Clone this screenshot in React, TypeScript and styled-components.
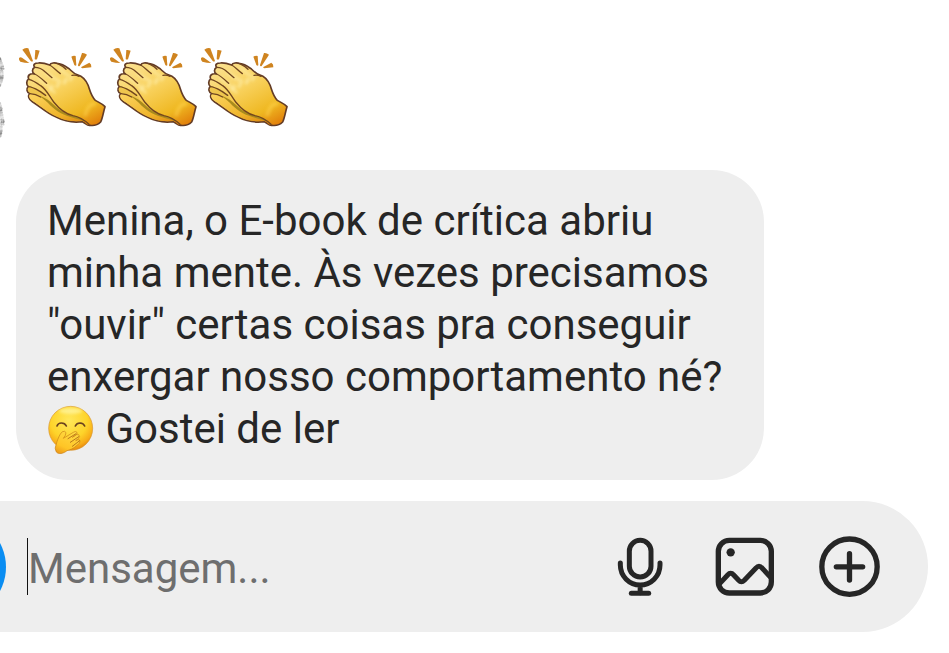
import React from "react";
import styled, { createGlobalStyle } from "styled-components";

const GlobalStyle = createGlobalStyle`
  *, *::before, *::after { box-sizing: border-box; }
  body { margin: 0; background: #fff; font-family: Roboto, "Liberation Sans", sans-serif; color: #262626; }
`;

const Chat = styled.main`
  display: flex;
  flex-direction: column;
  overflow: hidden;
  padding: 46px 0 21px;
`;

const ReactionRow = styled.div`
  display: flex;
  align-items: flex-start;
  margin-bottom: 31px;
`;

const AvatarEdge = styled.svg`
  width: 6px;
  height: 82px;
  margin: 11px 10px 0 0;
  flex: none;
`;

const Claps = styled.div`
  display: flex;
`;

const ClapIcon = styled.svg`
  display: block;
  width: 91px;
  height: 82px;
`;

const Bubble = styled.p`
  width: fit-content;
  max-width: 748px;
  margin: 0 16px 21px;
  padding: 25px 32px 25px 31px;
  border-radius: 52px;
  background: #eee;
  font-size: 42px;
  line-height: 52px;
`;

const FaceIcon = styled.svg`
  width: 48px;
  height: 50px;
  margin-top: -8px;
  vertical-align: -12px;
`;

const Composer = styled.form`
  display: flex;
  align-items: center;
  height: 131px;
  margin-right: 21px;
  padding-right: 48px;
  overflow: hidden;
  border-radius: 0 66px 66px 0;
  background: #eee;
`;

const CameraButton = styled.button`
  flex: none;
  width: 102px;
  height: 102px;
  margin-left: -96px;
  padding: 0;
  border: 0;
  border-radius: 50%;
  background: #0a8df2;
`;

const Caret = styled.span`
  flex: none;
  width: 1px;
  height: 57px;
  margin-left: 21px;
  background: #111;
`;

const MessageInput = styled.input`
  flex: 1;
  min-width: 0;
  height: 60px;
  padding: 4px 0 0;
  border: 0;
  outline: 0;
  background: transparent;
  color: #262626;
  font: 400 42px Roboto, "Liberation Sans", sans-serif;
  &::placeholder { color: #6e6e6e; opacity: 1; }
`;

const Actions = styled.div`
  display: flex;
  gap: 45px;
`;

const IconButton = styled.button`
  display: block;
  width: 60px;
  height: 60px;
  padding: 0;
  border: 0;
  background: transparent;
  color: #262626;
  svg { display: block; width: 100%; height: 100%; overflow: visible; }
`;

const Clap = ({ id }: { id: string }) => (
  <ClapIcon viewBox="48 33 273 246" role="img" aria-label="Palmas">
    <defs>
      <linearGradient id={`${id}-front`} x1="0.2" y1="0" x2="0.9" y2="1">
        <stop offset="0" stopColor="#fbe08c" />
        <stop offset="0.4" stopColor="#f8d05a" />
        <stop offset="0.75" stopColor="#efb822" />
        <stop offset="1" stopColor="#e07a08" />
      </linearGradient>
      <linearGradient id={`${id}-back`} x1="0" y1="0" x2="1" y2="1">
        <stop offset="0" stopColor="#fcd45f" />
        <stop offset="0.6" stopColor="#efb42a" />
        <stop offset="1" stopColor="#d77a0a" />
      </linearGradient>
      <filter id={`${id}-soft`} x="-50%" y="-50%" width="200%" height="200%">
        <feGaussianBlur stdDeviation="4" />
      </filter>
    </defs>
    <g fill="#cf8420">
      <path d="M57 69Q61 65 66 68L88 84Q74 84 61 80Q56 77 57 69Z" />
      <path d="M67 44Q75 37 85 40L99 78Q96 81 92 78Z" />
      <path d="M106 45Q112 44 119 47L111 73Q106 75 104 72Z" />
      <path d="M214 65Q220 61 227 63L229 91Q226 94 223 90Z" />
      <path d="M246 54Q254 53 261 59L239 93Q234 95 234 90Z" />
      <path d="M268 83Q275 87 274 97L247 100Q242 98 244 96Z" />
    </g>
    <g strokeLinecap="round" strokeLinejoin="round">
      <path d="M104 97C98 89 104 84 115 84C127 83 138 86 149 90C152 83 164 82 175 86C187 87 198 95 207 101C214 107 221 117 234 120C249 124 258 137 264 150C270 166 273 184 286 196C295 202 306 205 315 215C310 231 308 249 302 261C294 269 283 273 270 271C262 273 256 264 247 260C223 263 193 259 170 247C139 234 119 213 97 200C86 194 82 181 90 176C80 173 78 161 85 155C78 149 79 136 86 132C81 121 91 114 103 117C96 112 95 102 104 97Z" fill={`url(#${id}-front)`} stroke="#633c26" strokeWidth="5" />
      <path d="M90 177C107 176 123 185 138 192L153 198C169 222 192 238 220 244C241 247 253 255 267 265L265 270C258 268 254 260 247 258C223 261 193 257 171 245C140 232 120 211 98 198C90 193 84 184 90 177Z" fill={`url(#${id}-back)`} />
      <path d="M87 156C101 157 113 163 124 169L140 182L149 199C126 189 108 178 92 175C82 169 81 161 87 156Z" fill="#efc64e" />
      <path d="M119 184C139 188 149 199 163 211C182 229 201 240 225 244C240 247 250 252 257 259C234 252 204 246 183 235C157 222 146 202 119 184Z" fill="#a98b1d" />
      <path d="M138 114Q161 131 178 138M118 132Q145 151 163 172M178 99Q193 116 207 122" fill="none" stroke="#fff0ab" strokeWidth="9" opacity="0.55" filter={`url(#${id}-soft)`} />
      <g fill="#fff2b1" opacity="0.55" filter={`url(#${id}-soft)`}>
        <ellipse cx="154" cy="159" rx="5" ry="11" transform="rotate(28 154 159)" />
        <ellipse cx="174" cy="149" rx="5" ry="12" transform="rotate(28 174 149)" />
        <ellipse cx="196" cy="138" rx="6" ry="12" transform="rotate(28 196 138)" />
        <ellipse cx="214" cy="130" rx="5" ry="10" transform="rotate(28 214 130)" />
      </g>
      <path d="M256 238Q268 204 282 207" fill="none" stroke="#ffd453" strokeWidth="12" opacity="0.5" filter={`url(#${id}-soft)`} />
      <path d="M104 97C117 97 128 103 136 111L156 128M149 90C160 96 168 107 181 116M104 117C117 123 129 135 140 145M86 133C99 136 111 144 122 152C140 164 148 184 161 201C177 221 193 236 219 242C240 246 253 255 267 268M85 155C98 156 109 163 120 169L137 181M90 176C104 177 112 180 122 186M173 86C184 91 191 96 198 103M216 121Q227 119 237 124" fill="none" stroke="#71461f" strokeWidth="4" />
    </g>
  </ClapIcon>
);

const GigglingFace = () => (
  <FaceIcon viewBox="24 17 144 150" role="img" aria-label="Rosto rindo com a mão na boca">
    <defs>
      <radialGradient id="face" cx="0.46" cy="0.32" r="0.72">
        <stop offset="0" stopColor="#ffe75b" />
        <stop offset="0.58" stopColor="#fed42a" />
        <stop offset="0.83" stopColor="#f8ac18" />
        <stop offset="1" stopColor="#df7c0b" />
      </radialGradient>
      <linearGradient id="face-hand" x1="0.7" y1="0" x2="0.2" y2="1">
        <stop offset="0" stopColor="#ffda43" />
        <stop offset="0.7" stopColor="#ffc526" />
        <stop offset="1" stopColor="#ee9b18" />
      </linearGradient>
      <filter id="face-shine" x="-30%" y="-80%" width="160%" height="260%">
        <feGaussianBlur stdDeviation="5" />
      </filter>
    </defs>
    <circle cx="95" cy="87" r="66" fill="url(#face)" stroke="#d8952f" strokeWidth="2" />
    <ellipse cx="95" cy="35" rx="35" ry="9" fill="#fff7a4" opacity="0.75" filter="url(#face-shine)" />
    <g fill="none" stroke="#6b421e" strokeWidth="5" strokeLinecap="round">
      <path d="M54 80Q57 71 67 71Q78 71 82 80" />
      <path d="M109 80Q113 71 123 71Q134 72 137 80" />
    </g>
    <path d="M52 158Q45 147 52 134C54 125 59 113 64 104Q70 94 77 96Q84 98 79 108L73 117L103 99Q109 94 114 99Q116 103 110 108L100 114Q112 102 119 106Q125 111 118 118L110 124Q122 118 123 125Q124 132 114 138C105 148 91 152 84 154C73 163 59 166 52 158Z" fill="url(#face-hand)" stroke="#c98116" strokeWidth="2" strokeLinejoin="round" />
    <path d="M87 118L111 103M94 129L119 112M100 141L122 124" fill="none" stroke="#b9781b" strokeWidth="3" strokeLinecap="round" />
  </FaceIcon>
);

const speckles = Array.from({ length: 130 }, (_, i) => {
  const lower = i % 2;
  const t = ((i * 37) % 101) / 101;
  const depth = Math.sin(t * Math.PI) * 4;
  return {
    x: ((i * 19) % 17) / 17 * depth,
    y: (lower ? 46 : 1) + t * (lower ? 35 : 28),
    tone: ["#aaa", "#ccc", "#888", "#ddd", "#bbb"][i % 5],
  };
});

export default function App() {
  return (
    <>
      <GlobalStyle />
      <Chat>
        <ReactionRow>
          <AvatarEdge viewBox="0 0 6 82" aria-hidden="true">
            {speckles.map((s, i) => (
              <circle key={i} cx={s.x} cy={s.y} r="1" fill={s.tone} opacity="0.7" />
            ))}
          </AvatarEdge>
          <Claps>
            <Clap id="clap-a" />
            <Clap id="clap-b" />
            <Clap id="clap-c" />
          </Claps>
        </ReactionRow>
        <Bubble>
          Menina, o E-book de crítica abriu minha mente. Às vezes precisamos "ouvir" certas coisas pra conseguir
          enxergar nosso comportamento né? <GigglingFace /> Gostei de ler
        </Bubble>
        <Composer onSubmit={(e) => e.preventDefault()}>
          <CameraButton type="button" aria-label="Câmera" />
          <Caret aria-hidden="true" />
          <MessageInput type="text" aria-label="Mensagem" placeholder="Mensagem..." />
          <Actions>
            <IconButton type="button" aria-label="Gravar áudio">
              <svg viewBox="28 35 180 180" fill="none" stroke="currentColor" strokeWidth="15" strokeLinecap="round">
                <rect x="86" y="45" width="65" height="110" rx="32.5" />
                <path d="M59 113V119A59.5 60 0 0 0 178 119V113M118.5 180V202" />
                <path d="M92 203.500H144" />
              </svg>
            </IconButton>
            <IconButton type="button" aria-label="Enviar imagem">
              <svg viewBox="344 35 180 180" fill="none" stroke="currentColor" strokeWidth="16" strokeLinecap="round" strokeLinejoin="round">
                <rect x="354" y="45" width="159" height="158" rx="33" />
                <circle cx="391" cy="81" r="12.500" fill="currentColor" stroke="none" />
                <path d="M358 175L382 149Q391 139 400 149L415 165Q423 174 432 165L467 128Q476 117 485 128L510 155" strokeWidth="15" />
              </svg>
            </IconButton>
            <IconButton type="button" aria-label="Mais opções">
              <svg viewBox="60 125 180 180" fill="none" stroke="currentColor" strokeWidth="16" strokeLinecap="round">
                <circle cx="148.500" cy="214" r="83" />
                <path d="M148.500 175V254M109 214.500H188" />
              </svg>
            </IconButton>
          </Actions>
        </Composer>
      </Chat>
    </>
  );
}
